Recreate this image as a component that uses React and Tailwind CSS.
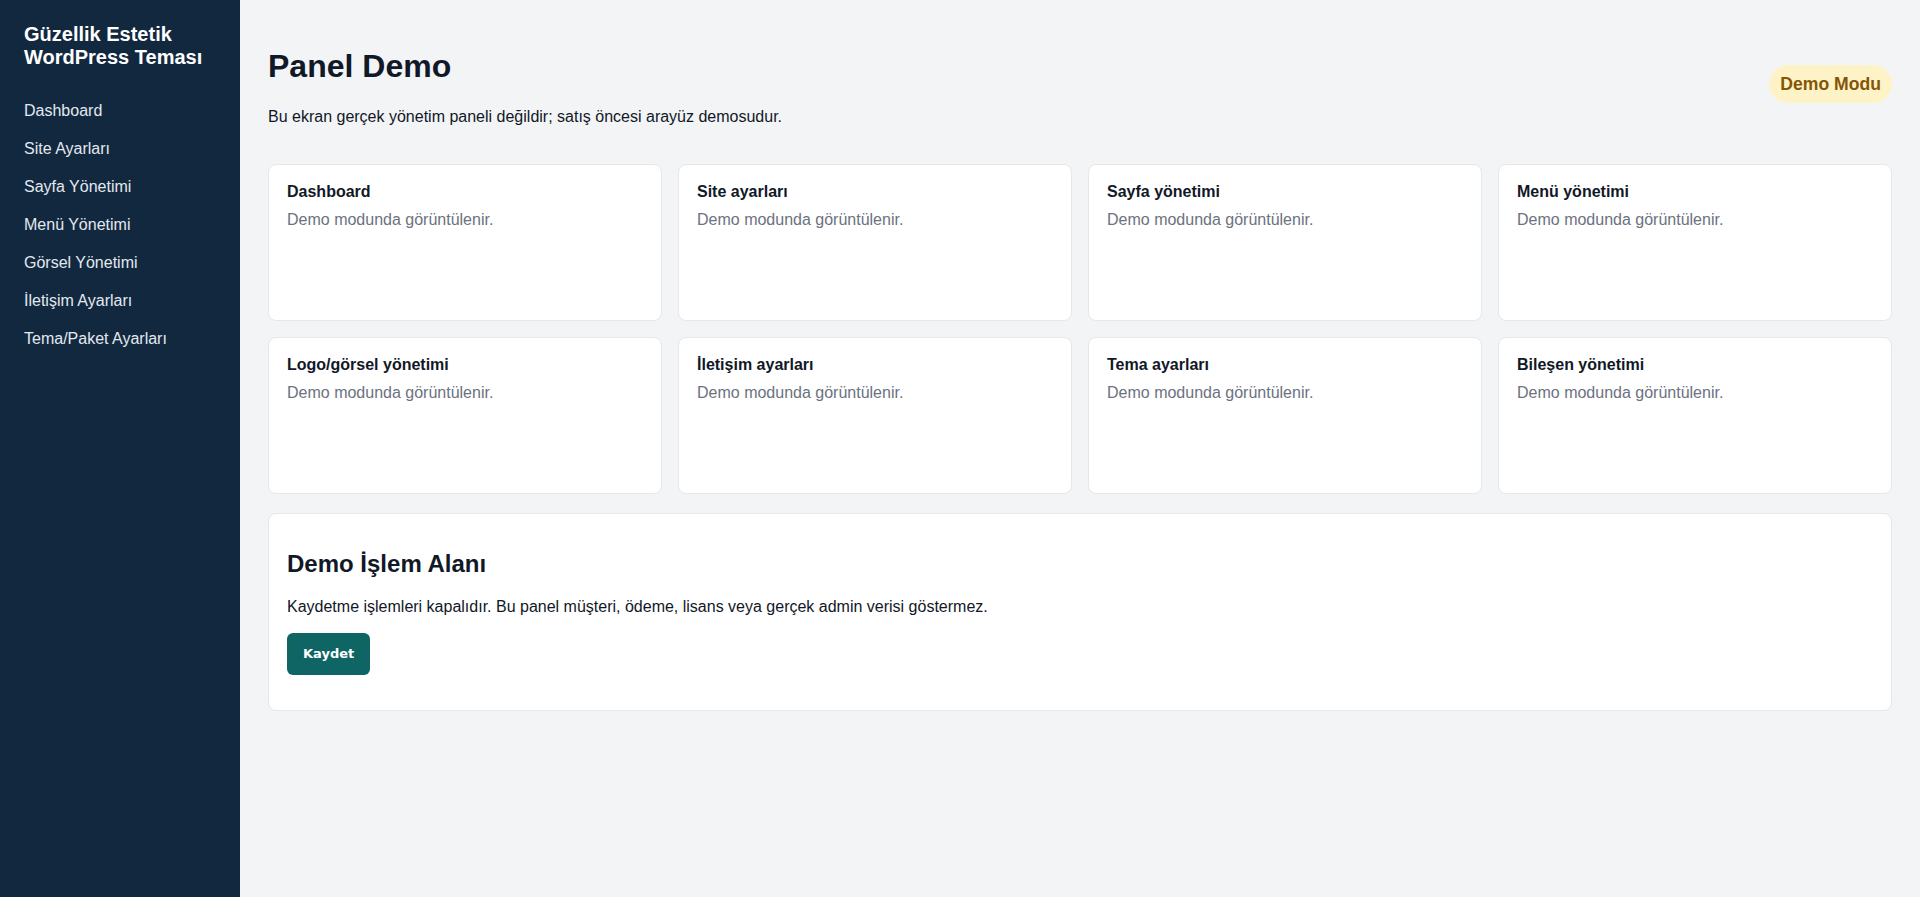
export default function App() {
  const nav = [
    "Dashboard",
    "Site Ayarları",
    "Sayfa Yönetimi",
    "Menü Yönetimi",
    "Görsel Yönetimi",
    "İletişim Ayarları",
    "Tema/Paket Ayarları",
  ];
  const cards = [
    "Dashboard",
    "Site ayarları",
    "Sayfa yönetimi",
    "Menü yönetimi",
    "Logo/görsel yönetimi",
    "İletişim ayarları",
    "Tema ayarları",
    "Bileşen yönetimi",
  ];
  return (
    <div className="flex min-h-[897px] w-full font-['Liberation_Sans',Arial,sans-serif] text-[16px] bg-[#f3f4f6]">
      <aside className="w-[240px] shrink-0 bg-[#12283f] px-6 pt-[23px]">
        <div className="text-[20px] font-bold leading-[23px] text-white mb-[23px]">
          Güzellik Estetik
          <br />
          WordPress Teması
        </div>
        <nav className="flex flex-col">
          {nav.map((n) => (
            <a key={n} className="block py-[10px] leading-[18px] text-[#e2e8f0]">
              {n}
            </a>
          ))}
        </nav>
      </aside>
      <main className="flex-1 px-7 pt-[48px] pb-7 text-[#111827]">
        <div className="flex items-start justify-between">
          <div>
            <h1 className="text-[32px] font-bold leading-[37px]">Panel Demo</h1>
            <p className="mt-[20px] leading-[24px]">
              Bu ekran gerçek yönetim paneli değildir; satış öncesi arayüz demosudur.
            </p>
          </div>
          <span className="mt-[17px] rounded-full bg-[#fef3c7] px-[11px] py-[9px] text-[17.6px] font-bold leading-[20px] text-[#855506]">
            Demo Modu
          </span>
        </div>
        <div className="mt-[35px] grid grid-cols-4 gap-4">
          {cards.map((c) => (
            <div
              key={c}
              className="h-[157px] rounded-lg border border-[#e5e7eb] bg-white px-[18px] pt-[18px]"
            >
              <div className="font-bold leading-[18px]">{c}</div>
              <div className="mt-[7px] leading-[24px] text-[#6b7280]">
                Demo modunda görüntülenir.
              </div>
            </div>
          ))}
        </div>
        <section className="mt-[19px] rounded-lg border border-[#e5e7eb] bg-white px-[18px] pt-[36px] pb-[35px]">
          <h2 className="text-[24px] font-bold leading-[28px]">Demo İşlem Alanı</h2>
          <p className="mt-[20px] leading-[18px]">
            Kaydetme işlemleri kapalıdır. Bu panel müşteri, ödeme, lisans veya gerçek admin verisi göstermez.
          </p>
          <button className="mt-[17px] h-[42px] rounded-md bg-[#0f6464] px-4 font-['DejaVu_Sans',sans-serif] text-[13px] font-bold text-white">
            Kaydet
          </button>
        </section>
      </main>
    </div>
  );
}
